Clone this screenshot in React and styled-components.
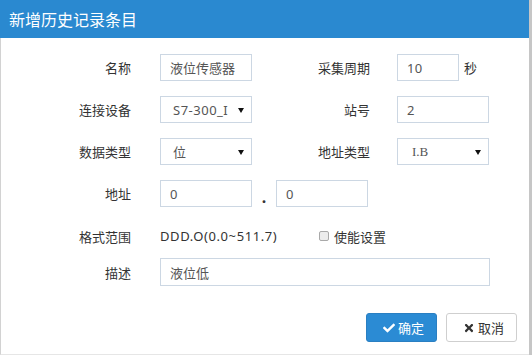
import React from 'react';
import styled, { createGlobalStyle } from 'styled-components';
import { FaCheck, FaTimes } from 'react-icons/fa';

const GlobalStyle = createGlobalStyle`
  html, body {
    margin: 0;
    padding: 0;
    background: #fff;
    overflow: hidden;
  }
  body {
    font-family: "Noto Sans", "Noto Sans CJK SC", sans-serif;
    font-size: 13px;
    color: #333;
  }
`;

const Dialog = styled.div`
  width: 529px;
  height: 355px;
  border-right: 3px solid #c6c6c6;
  display: flex;
  flex-direction: column;
  background: #fff;
`;

const Header = styled.div`
  height: 38px;
  flex-shrink: 0;
  background: #2a89d0;
  color: #fff;
  font-family: "Noto Sans CJK SC", sans-serif;
  font-size: 16px;
  display: flex;
  align-items: center;
  padding-left: 9px;
`;

const Body = styled.div`
  flex: 1;
  border-left: 1px solid #d2d2d2;
  border-bottom: 1px solid #e6e6e6;
  padding-top: 16px;
  display: flex;
  flex-direction: column;
`;

const Row = styled.div`
  display: flex;
  align-items: center;
  height: ${(p) => p.$h || 27}px;
  margin-bottom: ${(p) => (p.$mb === undefined ? 15 : p.$mb)}px;
`;

const Label = styled.div`
  width: ${(p) => p.$w || 130}px;
  margin-right: ${(p) => p.$mr || 29}px;
  text-align: right;
  color: #333;
  font-family: "Noto Sans CJK SC", sans-serif;
  flex-shrink: 0;
`;

const Field = styled.div`
  width: ${(p) => p.$w || 130}px;
  display: flex;
  align-items: center;
  flex-shrink: 0;
`;

const Input = styled.input`
  box-sizing: border-box;
  width: ${(p) => p.$w || 92}px;
  height: ${(p) => p.$h || 27}px;
  border: 1px solid #ccd7e3;
  border-radius: 0;
  padding: 0 9px;
  font-family: "Noto Sans", "Noto Sans CJK SC", sans-serif;
  font-size: 13px;
  letter-spacing: ${(p) => (p.$latin ? 0.4 : 0)}px;
  color: #555;
  outline: none;
  background: #fff;
`;

const Unit = styled.span`
  margin-left: 5px;
  color: #333;
  font-family: "Noto Sans CJK SC", sans-serif;
`;

const Select = styled.div`
  position: relative;
  box-sizing: border-box;
  width: 92px;
  height: 27px;
  border: 1px solid #ccd7e3;
  display: flex;
  align-items: center;
  padding-left: ${(p) => p.$pl || 12}px;
  color: #555;
  background: #fff;
`;

const SelectText = styled.span`
  white-space: nowrap;
  font-family: ${(p) => (p.$serif ? '"Liberation Serif", serif' : '"Noto Sans", "Noto Sans CJK SC", sans-serif')};
  font-size: 13px;
  letter-spacing: ${(p) => (p.$serif ? 0 : 0.5)}px;
`;

const Caret = styled.span`
  position: absolute;
  right: 7px;
  top: 11px;
  width: 0;
  height: 0;
  border-left: 3px solid transparent;
  border-right: 3px solid transparent;
  border-top: 5px solid #111;
`;

const Dot = styled.span`
  width: 24px;
  text-align: center;
  font-weight: bold;
  font-size: 16px;
  color: #333;
  padding-top: 6px;
`;

const Plain = styled.span`
  color: #333;
  white-space: nowrap;
  letter-spacing: 0.6px;
`;

const CheckWrap = styled.label`
  display: flex;
  align-items: center;
  margin-left: 29px;
  font-family: "Noto Sans CJK SC", sans-serif;
  color: #333;
`;

const CheckBox = styled.span`
  box-sizing: border-box;
  width: 10px;
  height: 10px;
  border: 1px solid #a9a9a9;
  border-radius: 2px;
  background: #ececec;
  margin-right: 5px;
`;

const Footer = styled.div`
  display: flex;
  justify-content: flex-end;
  gap: 9px;
  padding: 0 12px 0 0;
  margin-top: 27px;
`;

const Button = styled.button`
  box-sizing: border-box;
  height: 29px;
  width: ${(p) => p.$w || 71}px;
  display: flex;
  align-items: center;
  justify-content: center;
  gap: 3px;
  border-radius: 3px;
  font-family: "Noto Sans CJK SC", sans-serif;
  font-size: 13px;
  cursor: pointer;
  border: 1px solid ${(p) => (p.$primary ? '#2a7fc2' : '#cfcfcf')};
  background: ${(p) => (p.$primary ? '#2b8bd4' : '#fff')};
  color: ${(p) => (p.$primary ? '#fff' : '#333')};
  padding: 0 0 0 4px;

  svg {
    width: 12px;
    height: 12px;
  }
`;

const SelectField = ({ value, serif, pl }) => (
  <Select $pl={pl}>
    <SelectText $serif={serif}>{value}</SelectText>
    <Caret />
  </Select>
);

const App = () => {
  return (
    <>
      <GlobalStyle />
      <Dialog>
        <Header>新增历史记录条目</Header>
        <Body>
          <Row>
            <Label>名称</Label>
            <Field>
              <Input defaultValue="液位传感器" />
            </Field>
            <Label $w={80} $mr={27}>采集周期</Label>
            <Input $latin $w={62} defaultValue="10" />
            <Unit>秒</Unit>
          </Row>
          <Row>
            <Label>连接设备</Label>
            <Field>
              <SelectField value="S7-300_I" />
            </Field>
            <Label $w={80} $mr={27}>站号</Label>
            <Input $latin defaultValue="2" />
          </Row>
          <Row>
            <Label>数据类型</Label>
            <Field>
              <SelectField value="位" />
            </Field>
            <Label $w={80} $mr={27}>地址类型</Label>
            <SelectField value="I.B" serif pl={14} />
          </Row>
          <Row>
            <Label>地址</Label>
            <Field $w={220}>
              <Input $latin defaultValue="0" />
              <Dot>.</Dot>
              <Input $latin defaultValue="0" />
            </Field>
          </Row>
          <Row $h={28} $mb={8}>
            <Label>格式范围</Label>
            <Field>
              <Plain>DDD.O(0.0~511.7)</Plain>
            </Field>
            <CheckWrap>
              <CheckBox />
              使能设置
            </CheckWrap>
          </Row>
          <Row $h={28} $mb={0}>
            <Label>描述</Label>
            <Input $w={330} $h={28} defaultValue="液位低" />
          </Row>
          <Footer>
            <Button $primary>
              <FaCheck />
              确定
            </Button>
            <Button $w={71}>
              <FaTimes />
              取消
            </Button>
          </Footer>
        </Body>
      </Dialog>
    </>
  );
};

export default App;
